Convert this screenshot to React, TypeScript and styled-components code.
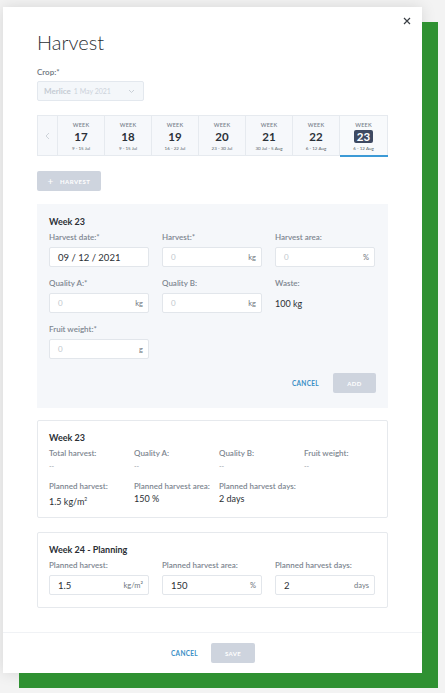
import React from 'react';
import styled, { createGlobalStyle } from 'styled-components';

const Global = createGlobalStyle`
  html, body { margin: 0; padding: 0; background: #f3f3f3; }
  body { font-family: Lato, "Open Sans", sans-serif; color: #2c3036; }
  * { box-sizing: border-box; }
`;

const Page = styled.div`
  width: 445px;
  height: 693px;
  padding: 7px 0 0 3px;
  overflow: hidden;
`;

const Modal = styled.div`
  position: relative;
  width: 419px;
  height: 666px;
  background: #fff;
  box-shadow: 16px 15px 0 0 #2f9132, 0 0 14px rgba(0, 0, 0, 0.12);
  display: flex;
  flex-direction: column;
`;

const Close = styled.button`
  position: absolute;
  top: 8px;
  right: 9px;
  width: 12px;
  height: 12px;
  padding: 0;
  border: none;
  background: none;
  display: flex;
  align-items: center;
  justify-content: center;
`;

const Body = styled.div`
  flex: 1;
  padding: 20px 34px 0;
  display: flex;
  flex-direction: column;
`;

const Title = styled.h1`
  margin: 0;
  font-size: 20px;
  line-height: 30px;
  font-weight: 300;
  color: #2b2f35;
`;

const Label = styled.div`
  font-size: 8px;
  line-height: 10px;
  color: #7d8690;
  font-weight: 600;
  white-space: nowrap;
`;

const CropLabel = styled(Label)`
  margin-top: 10px;
  color: #6c747d;
`;

const Select = styled.div`
  margin-top: 4px;
  width: 107px;
  height: 20px;
  background: #f4f7fa;
  border: 1px solid #e3e8ee;
  border-radius: 2px;
  display: flex;
  align-items: center;
  padding: 0 8px 0 6px;
  font-size: 8px;
  color: #c2c9d1;
  gap: 3px;
`;

const SelectName = styled.span`
  font-weight: 700;
  color: #c4cbd3;
`;

const SelectDate = styled.span`
  font-size: 7px;
  color: #cdd3da;
  flex: 1;
`;

const WeekStrip = styled.div`
  margin-top: 14px;
  height: 41px;
  display: grid;
  grid-template-columns: 20px repeat(7, 1fr);
  border: 1px solid #e6eaef;
  background: #f6f8fb;
`;

const ArrowCell = styled.div`
  display: flex;
  align-items: center;
  justify-content: center;
  border-right: 1px solid #e6eaef;
`;

const WeekCell = styled.div<{ $active?: boolean }>`
  position: relative;
  display: flex;
  flex-direction: column;
  align-items: center;
  padding-top: 6px;
  border-right: ${p => (p.$active ? 'none' : '1px solid #e6eaef')};
  background: ${p => (p.$active ? '#f8fafc' : 'transparent')};
  &::after {
    content: '';
    display: ${p => (p.$active ? 'block' : 'none')};
    position: absolute;
    left: 0;
    right: -1px;
    bottom: -2px;
    height: 2px;
    background: #3c9ad6;
  }
`;

const WeekWord = styled.div`
  font-size: 5.5px;
  line-height: 7px;
  letter-spacing: 0.2px;
  color: #7a838d;
  font-weight: 600;
`;

const WeekNum = styled.div<{ $active?: boolean }>`
  margin-top: 1px;
  font-size: 11.5px;
  line-height: 13px;
  font-weight: 700;
  color: ${p => (p.$active ? '#fff' : '#2b3038')};
  background: ${p => (p.$active ? '#3e4a62' : 'transparent')};
  border-radius: 2px;
  padding: 0 ${p => (p.$active ? '3px' : '0')};
`;

const WeekDates = styled.div`
  margin-top: 3px;
  font-size: 4.5px;
  line-height: 6px;
  color: #555d66;
`;

const HarvestBtn = styled.button`
  margin-top: 15px;
  width: 64px;
  height: 20px;
  border: none;
  border-radius: 2px;
  background: #ced4de;
  color: #fff;
  font-family: inherit;
  font-size: 6px;
  font-weight: 700;
  letter-spacing: 0.5px;
  display: flex;
  align-items: center;
  justify-content: center;
  gap: 6px;
  padding: 0;
`;

const Plus = styled.span`
  font-size: 10px;
  font-weight: 400;
`;

const FormPanel = styled.div`
  margin-top: 13px;
  background: #f5f7fa;
  padding: 11px 12px 15px;
  display: flex;
  flex-direction: column;
`;

const CardTitle = styled.div`
  font-size: 9px;
  line-height: 14px;
  font-weight: 700;
  color: #2b2f35;
`;

const FieldGrid = styled.div`
  display: grid;
  grid-template-columns: repeat(3, 100px);
  column-gap: 13px;
  row-gap: 11px;
  margin-top: 3px;
`;

const Field = styled.div`
  display: flex;
  flex-direction: column;
  gap: 5px;
`;

const InputBox = styled.div`
  height: 20px;
  background: #fff;
  border: 1px solid #e2e6eb;
  border-radius: 2px;
  display: flex;
  align-items: center;
  justify-content: space-between;
  padding: 0 5px 0 8px;
`;

const InputValue = styled.span<{ $placeholder?: boolean }>`
  font-size: ${p => (p.$placeholder ? '8px' : '9.5px')};
  color: ${p => (p.$placeholder ? '#c1c7ce' : '#2b2f35')};
`;

const Unit = styled.span`
  font-size: 7.5px;
  color: #6f7780;
`;

const StaticValue = styled.div`
  height: 20px;
  display: flex;
  align-items: center;
  font-size: 9px;
  color: #2b2f35;
`;

const Actions = styled.div`
  margin-top: 14px;
  display: flex;
  justify-content: flex-end;
  align-items: center;
  gap: 14px;
`;

const TextBtn = styled.button`
  border: none;
  background: none;
  padding: 0;
  font-family: inherit;
  font-size: 6.5px;
  font-weight: 700;
  color: #3a8fc6;
  letter-spacing: 0.3px;
`;

const DisabledBtn = styled.button<{ $w: number }>`
  width: ${p => p.$w}px;
  height: 20px;
  border: none;
  border-radius: 2px;
  background: #ced4de;
  color: #fff;
  font-family: inherit;
  font-size: 6px;
  font-weight: 700;
  letter-spacing: 0.4px;
  padding: 0;
`;

const Card = styled.div<{ $mt: number; $pb: number }>`
  margin-top: ${p => p.$mt}px;
  border: 1px solid #e6e9ed;
  border-radius: 2px;
  padding: 10px 11px ${p => p.$pb}px;
  display: flex;
  flex-direction: column;
`;

const SummaryGrid = styled.div`
  margin-top: 3px;
  display: grid;
  grid-template-columns: repeat(4, 85px);
  row-gap: 9px;
`;

const SummaryItem = styled.div`
  display: flex;
  flex-direction: column;
  gap: 2px;
`;

const SummaryValue = styled.div<{ $muted?: boolean }>`
  font-size: ${p => (p.$muted ? '7px' : '9px')};
  line-height: 12px;
  color: ${p => (p.$muted ? '#9aa1a9' : '#2b2f35')};
`;

const Sup = styled.sup`
  font-size: 5px;
`;

const Footer = styled.div`
  height: 41px;
  border-top: 1px solid #f0f2f5;
  display: flex;
  justify-content: center;
  align-items: center;
  gap: 13px;
  padding-left: 1px;
`;

const weeks = [
  { n: 17, d: '9 - 15 Jul' },
  { n: 18, d: '9 - 15 Jul' },
  { n: 19, d: '16 - 22 Jul' },
  { n: 20, d: '23 - 30 Jul' },
  { n: 21, d: '30 Jul - 5 Aug' },
  { n: 22, d: '6 - 12 Aug' },
  { n: 23, d: '6 - 12 Aug', active: true },
];

const Input = ({ value, unit, placeholder }: { value: string; unit?: string; placeholder?: boolean }) => (
  <InputBox>
    <InputValue $placeholder={placeholder}>{value}</InputValue>
    {unit && <Unit>{unit}</Unit>}
  </InputBox>
);

export default function App() {
  return (
    <>
      <Global />
      <Page>
        <Modal>
          <Close aria-label="close">
            <svg width="8" height="8" viewBox="0 0 8 8">
              <path d="M1 1L7 7M7 1L1 7" stroke="#3a3f45" strokeWidth="1.2" />
            </svg>
          </Close>
          <Body>
            <Title>Harvest</Title>
            <CropLabel>Crop:*</CropLabel>
            <Select>
              <SelectName>Merlice</SelectName>
              <SelectDate>1 May 2021</SelectDate>
              <svg width="7" height="5" viewBox="0 0 7 5">
                <path d="M1 1L3.5 3.5L6 1" stroke="#c4cbd3" strokeWidth="0.9" fill="none" />
              </svg>
            </Select>
            <WeekStrip>
              <ArrowCell>
                <svg width="5" height="8" viewBox="0 0 5 8">
                  <path d="M4 1L1 4L4 7" stroke="#c9cfd6" strokeWidth="0.9" fill="none" />
                </svg>
              </ArrowCell>
              {weeks.map(w => (
                <WeekCell key={w.n} $active={w.active}>
                  <WeekWord>WEEK</WeekWord>
                  <WeekNum $active={w.active}>{w.n}</WeekNum>
                  <WeekDates>{w.d}</WeekDates>
                </WeekCell>
              ))}
            </WeekStrip>
            <HarvestBtn>
              <Plus>+</Plus>
              <span>HARVEST</span>
            </HarvestBtn>
            <FormPanel>
              <CardTitle>Week 23</CardTitle>
              <FieldGrid>
                <Field>
                  <Label>Harvest date:*</Label>
                  <Input value="09 / 12 / 2021" />
                </Field>
                <Field>
                  <Label>Harvest:*</Label>
                  <Input value="0" unit="kg" placeholder />
                </Field>
                <Field>
                  <Label>Harvest area:</Label>
                  <Input value="0" unit="%" placeholder />
                </Field>
                <Field>
                  <Label>Quality A:*</Label>
                  <Input value="0" unit="kg" placeholder />
                </Field>
                <Field>
                  <Label>Quality B:</Label>
                  <Input value="0" unit="kg" placeholder />
                </Field>
                <Field>
                  <Label>Waste:</Label>
                  <StaticValue>100 kg</StaticValue>
                </Field>
                <Field>
                  <Label>Fruit weight:*</Label>
                  <Input value="0" unit="g" placeholder />
                </Field>
              </FieldGrid>
              <Actions>
                <TextBtn>CANCEL</TextBtn>
                <DisabledBtn $w={43}>ADD</DisabledBtn>
              </Actions>
            </FormPanel>
            <Card $mt={12} $pb={9}>
              <CardTitle>Week 23</CardTitle>
              <SummaryGrid>
                <SummaryItem>
                  <Label>Total harvest:</Label>
                  <SummaryValue $muted>--</SummaryValue>
                </SummaryItem>
                <SummaryItem>
                  <Label>Quality A:</Label>
                  <SummaryValue $muted>--</SummaryValue>
                </SummaryItem>
                <SummaryItem>
                  <Label>Quality B:</Label>
                  <SummaryValue $muted>--</SummaryValue>
                </SummaryItem>
                <SummaryItem>
                  <Label>Fruit weight:</Label>
                  <SummaryValue $muted>--</SummaryValue>
                </SummaryItem>
                <SummaryItem>
                  <Label>Planned harvest:</Label>
                  <SummaryValue>
                    1.5 kg/m<Sup>2</Sup>
                  </SummaryValue>
                </SummaryItem>
                <SummaryItem>
                  <Label>Planned harvest area:</Label>
                  <SummaryValue>150 %</SummaryValue>
                </SummaryItem>
                <SummaryItem>
                  <Label>Planned harvest days:</Label>
                  <SummaryValue>2 days</SummaryValue>
                </SummaryItem>
              </SummaryGrid>
            </Card>
            <Card $mt={14} $pb={12}>
              <CardTitle>Week 24 - Planning</CardTitle>
              <FieldGrid>
                <Field>
                  <Label>Planned harvest:</Label>
                  <Input value="1.5" unit="kg/m²" />
                </Field>
                <Field>
                  <Label>Planned harvest area:</Label>
                  <Input value="150" unit="%" />
                </Field>
                <Field>
                  <Label>Planned harvest days:</Label>
                  <Input value="2" unit="days" />
                </Field>
              </FieldGrid>
            </Card>
          </Body>
          <Footer>
            <TextBtn>CANCEL</TextBtn>
            <DisabledBtn $w={44}>SAVE</DisabledBtn>
          </Footer>
        </Modal>
      </Page>
    </>
  );
}
